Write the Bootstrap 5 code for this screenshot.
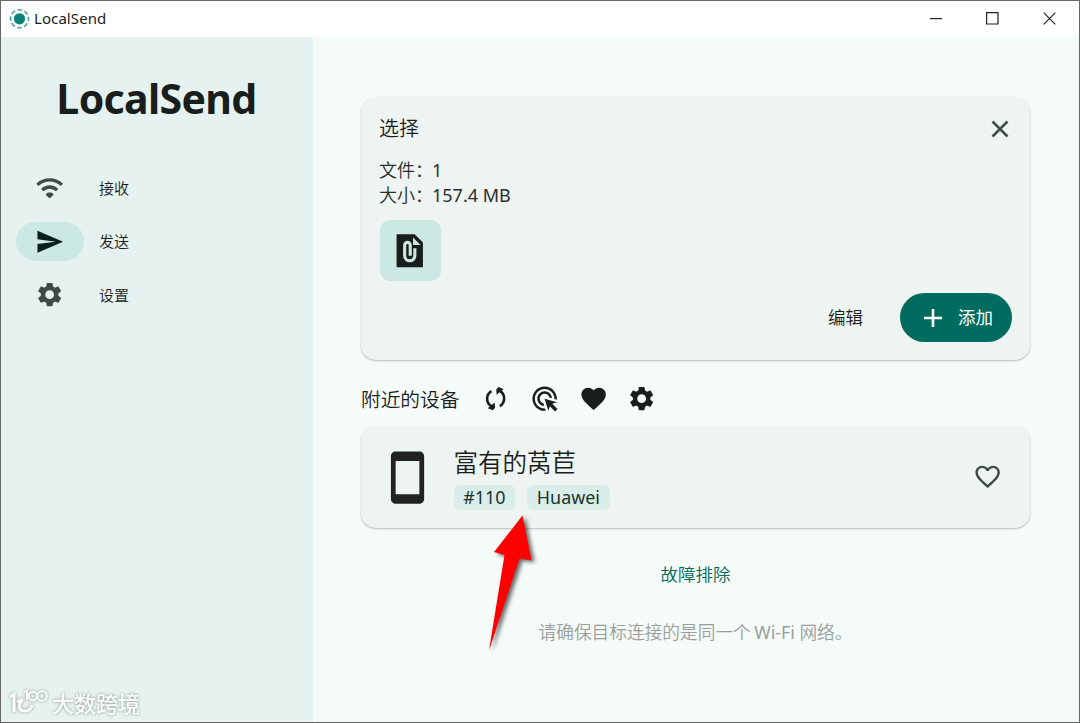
<!DOCTYPE html>
<html lang="zh-CN">
<head>
    <meta charset="UTF-8">
    <meta name="viewport" content="width=device-width, initial-scale=1.0">
    <title>LocalSend</title>
    <link href="https://cdn.jsdelivr.net/npm/bootstrap@5.3.0/dist/css/bootstrap.min.css" rel="stylesheet">
    <style>
        body {
            font-family: "Noto Sans", "Noto Sans CJK SC", sans-serif;
            color: #191d1c;
            background: #f5fbf9;
        }
        svg { display: block; flex-shrink: 0; fill: currentColor; }
        .line-icon { fill: none; stroke: currentColor; }
        .app-window { height: 723px; border: 1px solid #666; overflow: hidden; }
        .title-bar { height: 36px; background: #fff; padding-left: 8px; font-size: 15px; line-height: 20px; }
        .title-name { margin: -2px 0 0 4px; letter-spacing: .08px; }
        .win-btns { margin: -1px 1px 0 0; }
        .win-btn { width: 57px; height: 36px; color: #222; }
        .side-bar { width: 312px; padding-right: 1px; background: #e6f2ef; }
        .app-name { font-size: 41px; line-height: 56px; letter-spacing: -.65px; margin: 33px 0 35px; }
        .side-link { height: 53.5px; padding-left: 15px; font-size: 15px; color: #191d1c; font-weight: 350; }
        .side-pill { width: 68px; height: 39px; border-radius: 20px; margin-right: 15px; color: #3f4947; }
        .active .side-pill { background: #cce8e2; color: #05201c; }
        .main-area { padding: 60px 49px 0 48px; }
        .panel {
            background: #eef4f2;
            border: 0;
            border-radius: 15px;
            box-shadow: 0 1px 2px rgba(0, 0, 0, .26);
        }
        .pick-panel { height: 263px; padding: 17px 18px 18px 18px; font-weight: 350; }
        .pick-title { font-size: 20px; line-height: 30px; }
        .pick-info { font-size: 18px; line-height: 24.5px; margin: 14px 0 13px; color: #2a2e2d; }
        .latin { font-weight: 400; margin-left: -1px; }
        .file-tile { width: 61px; height: 61px; border-radius: 10px; background: #cce8e2; margin-left: .5px; }
        .edit-btn { font-size: 17.5px; margin-right: 37px; }
        .add-btn {
            width: 112px; height: 49px; border-radius: 25px; padding: 0 0 0 5px;
            background: #006b5f; color: #fff; font-size: 17.5px;
        }
        .near-row { height: 66px; padding-top: 12px; }
        .near-title { font-size: 19.7px; font-weight: 350; width: 120px; padding-top: 1px; }
        .near-icons { gap: 19.5px; }
        .device-panel { height: 102px; padding: 0 28px 0 18px; }
        .device-text { margin: 1px 0 0 17.5px; }
        .device-name { font-size: 24.5px; line-height: 34px; margin-bottom: 5px; font-weight: 350; }
        .tag { background: #daede9; border-radius: 6px; height: 25px; line-height: 24px; padding: 0 9.7px; font-size: 17.9px; color: #1a3430; }
        .help-link { font-size: 17.5px; line-height: 26px; color: #006b5f; margin: 33px 0 32px; font-weight: 350; }
        .hint { font-size: 17.7px; line-height: 26px; color: #999e9d; font-weight: 350; }
        .pointer { left: 480px; top: 505px; filter: drop-shadow(3px 2px 2px rgba(0, 0, 0, .6)); }
        .site-mark { left: 8px; top: 686px; color: #fafefd; filter: drop-shadow(0 0 1.5px rgba(0, 0, 0, .4)); }
        .site-mark span { font-size: 22px; line-height: 30px; font-weight: 500; margin-left: 3px; }
    </style>
</head>
<body>
    <svg width="0" height="0" class="position-absolute">
        <symbol id="gear" viewBox="0 0 24 24"><path d="M19.14 12.94c.04-.3.06-.61.06-.94 0-.32-.02-.64-.07-.94l2.03-1.58c.18-.14.23-.41.12-.61l-1.92-3.32c-.12-.22-.37-.29-.59-.22l-2.39.96c-.5-.38-1.03-.7-1.62-.94l-.36-2.54c-.04-.24-.24-.41-.48-.41h-3.84c-.24 0-.43.17-.47.41l-.36 2.54c-.59.24-1.13.57-1.62.94l-2.39-.96c-.22-.08-.47 0-.59.22L2.74 8.87c-.12.21-.08.47.12.61l2.03 1.58c-.05.3-.09.63-.09.94s.02.64.07.94l-2.03 1.58c-.18.14-.23.41-.12.61l1.92 3.32c.12.22.37.29.59.22l2.39-.96c.5.38 1.03.7 1.62.94l.36 2.54c.05.24.24.41.48.41h3.84c.24 0 .44-.17.47-.41l.36-2.54c.59-.24 1.13-.56 1.62-.94l2.39.96c.22.08.47 0 .59-.22l1.92-3.32c.12-.22.07-.47-.12-.61l-2.01-1.58zM12 15.6c-1.98 0-3.6-1.62-3.6-3.6s1.62-3.6 3.6-3.6 3.6 1.62 3.6 3.6-1.62 3.6-3.6 3.6z"/></symbol>
    </svg>

    <div class="app-window d-flex flex-column position-relative">
        <header class="title-bar d-flex align-items-center">
            <svg width="21" height="21" viewBox="0 0 21 21" color="#0b8378">
                <circle cx="10.5" cy="9.8" r="5.6"/>
                <circle cx="10.5" cy="9.8" r="9" fill="none" stroke="currentColor" stroke-width="1.6" stroke-dasharray="4.6 2.47" stroke-dashoffset="2.3" opacity=".75"/>
            </svg>
            <span class="title-name">LocalSend</span>
            <div class="win-btns d-flex ms-auto">
                <div class="win-btn d-flex align-items-center justify-content-center"><svg width="12" height="12"><path d="M0 5h12v1.2H0z"/></svg></div>
                <div class="win-btn d-flex align-items-center justify-content-center"><svg class="line-icon" width="13" height="13"><path d="M.6.6h11.4v11.4H.6z" stroke-width="1.2"/></svg></div>
                <div class="win-btn d-flex align-items-center justify-content-center"><svg class="line-icon" width="13" height="13"><path d="M.7.7l11.6 11.6M12.3.7L.7 12.3" stroke-width="1.2"/></svg></div>
            </div>
        </header>

        <div class="d-flex flex-grow-1">
            <nav class="side-bar flex-shrink-0">
                <h1 class="app-name fw-bold text-center">LocalSend</h1>
                <a class="side-link d-flex align-items-center text-decoration-none">
                    <span class="side-pill d-flex align-items-center justify-content-center">
                        <svg width="29.3" height="29.3" viewBox="0 0 24 24"><path d="M2 9.7C7.5 4.2 16.5 4.2 22 9.7M5.9 14C9.4 10.6 14.6 10.6 18.1 14" fill="none" stroke="currentColor" stroke-width="2.7"/><path d="M9 17.2c1.7-1.5 4.3-1.5 6 0 .3.3.3.5 0 .8l-2.3 2.2c-.5.4-.9.4-1.4 0L9 18c-.3-.3-.3-.5 0-.8z"/></svg>
                    </span>接收
                </a>
                <a class="side-link active d-flex align-items-center text-decoration-none">
                    <span class="side-pill d-flex align-items-center justify-content-center">
                        <svg width="29.3" height="29.3" viewBox="0 0 24 24"><path d="M2.01 21L23 12 2.01 3 2 10l15 2-15 2z"/></svg>
                    </span>发送
                </a>
                <a class="side-link d-flex align-items-center text-decoration-none">
                    <span class="side-pill d-flex align-items-center justify-content-center">
                        <svg width="29.3" height="29.3"><use href="#gear"/></svg>
                    </span>设置
                </a>
            </nav>

            <main class="main-area flex-grow-1">
                <section class="card panel pick-panel">
                    <div class="d-flex justify-content-between align-items-center">
                        <span class="pick-title">选择</span>
                        <svg class="line-icon" width="18" height="18" color="#3c504c" style="margin-right: 3px"><path d="M1.5 1.5l15 15m0-15l-15 15" stroke-width="2.6"/></svg>
                    </div>
                    <div class="pick-info">文件：<span class="latin">1</span><br>大小：<span class="latin">157.4 MB</span></div>
                    <div class="file-tile d-flex align-items-center justify-content-center">
                        <svg width="39.5" height="39.5" viewBox="0 0 24 24">
                            <path d="M4 2h11l5 5v15H4z"/>
                            <path d="M14 3.9v4.6h4.6z" fill="#cce8e2"/>
                            <path d="M15.1 10.5V15a3.1 3.1 0 0 1-6.2 0V8.6a1.7 1.7 0 0 1 3.4 0V15" fill="none" stroke="#cce8e2" stroke-width="1.9"/>
                        </svg>
                    </div>
                    <div class="d-flex justify-content-end align-items-center mt-auto">
                        <span class="edit-btn">编辑</span>
                        <button class="btn add-btn border-0 d-flex align-items-center justify-content-center">
                            <svg class="line-icon" width="18" height="18"><path d="M9 0v18M0 9h18" stroke-width="2.6"/></svg>
                            <span class="ms-3">添加</span>
                        </button>
                    </div>
                </section>

                <div class="near-row d-flex align-items-center">
                    <span class="near-title">附近的设备</span>
                    <div class="near-icons d-flex">
                        <svg width="29.3" height="29.3" viewBox="0 0 24 24">
                            <path d="M8.6 5.9A7.2 7.2 0 0 0 8.9 18.5M15.4 18.1A7.2 7.2 0 0 0 15.1 5.5" fill="none" stroke="currentColor" stroke-width="2.1"/>
                            <path d="M11.2 15.2l.3 4.3-1.7 2-4.3-1.6zM12.8 8.8l-.3-4.3 1.7-2 4.3 1.6z"/>
                        </svg>
                        <svg width="29.3" height="29.3" viewBox="0 0 24 24"><path d="M11.71 17.99C8.53 17.84 6 15.22 6 12c0-3.31 2.69-6 6-6 3.22 0 5.84 2.53 5.99 5.71l-2.1-.63C15.48 9.31 13.89 8 12 8c-2.21 0-4 1.79-4 4 0 1.89 1.31 3.48 3.08 3.89l.63 2.1zM22 12c0 .3-.01.6-.04.9l-1.97-.59c.01-.1.01-.21.01-.31 0-4.42-3.58-8-8-8s-8 3.58-8 8 3.58 8 8 8c.1 0 .21 0 .31-.01l.59 1.97c-.3.03-.6.04-.9.04C6.48 22 2 17.52 2 12S6.48 2 12 2s10 4.48 10 10zm-3.77 4.26L22 15l-10-3 3 10 1.26-3.77 4.27 4.27 1.98-1.98-4.28-4.26z"/></svg>
                        <svg width="29.3" height="29.3" viewBox="0 0 24 24"><path d="M12 21.35l-1.45-1.32C5.4 15.36 2 12.28 2 8.5 2 5.42 4.42 3 7.5 3c1.74 0 3.41.81 4.5 2.09C13.09 3.81 14.76 3 16.5 3 19.58 3 22 5.42 22 8.5c0 3.78-3.4 6.86-8.55 11.54L12 21.35z"/></svg>
                        <svg width="29.3" height="29.3"><use href="#gear"/></svg>
                    </div>
                </div>

                <section class="card panel device-panel flex-row align-items-center">
                    <svg width="57" height="57" viewBox="0 0 24 24" color="#222"><path d="M17 1.01L7 1c-1.1 0-1.99.9-1.99 2v18c0 1.1.89 2 1.99 2h10c1.1 0 2-.9 2-2V3c0-1.1-.9-1.99-2-1.99zM17 19H7V5h10v14z"/></svg>
                    <div class="device-text">
                        <div class="device-name">富有的莴苣</div>
                        <div class="d-flex">
                            <span class="tag me-2">#110</span>
                            <span class="tag ms-1">Huawei</span>
                        </div>
                    </div>
                    <svg class="ms-auto" width="29.3" height="29.3" viewBox="0 0 24 24" color="#3f4947"><path d="M16.5 3c-1.74 0-3.41.81-4.5 2.09C10.91 3.81 9.24 3 7.5 3 4.42 3 2 5.42 2 8.5c0 3.78 3.4 6.86 8.55 11.54L12 21.35l1.45-1.32C18.6 15.36 22 12.28 22 8.5 22 5.42 19.58 3 16.5 3zm-4.4 15.55l-.1.1-.1-.1C7.14 14.24 4 11.39 4 8.5 4 6.5 5.5 5 7.5 5c1.54 0 3.04.99 3.57 2.36h1.87C13.46 5.99 14.96 5 16.5 5c2 0 3.5 1.5 3.5 3.5 0 2.89-3.14 5.74-7.9 10.05z"/></svg>
                </section>

                <div class="help-link text-center">故障排除</div>
                <div class="hint text-center">请确保目标连接的是同一个 <span class="latin">Wi-Fi</span> 网络。</div>
            </main>
        </div>

        <!-- red pointer over the device card -->
        <svg class="pointer position-absolute" width="65" height="150"><path d="M41.5 9.5L50.5 54.500 38.5 52.500 8 144.500 23.500 49 13 46z" fill="#f00"/></svg>

        <div class="site-mark position-absolute d-flex align-items-center">
            <svg class="line-icon" width="40" height="32">
                <path d="M1 10l4-2.500v17.500M13 13.500c-5 5-2.500 11 3 10.500 4 0 6-2 7-6M8 15l6-3" stroke-width="3"/>
                <path d="M15 5l3-1v9" stroke-width="2"/>
                <circle cx="24" cy="9" r="4.3" stroke-width="2"/>
                <circle cx="33" cy="9" r="4.8" stroke-width="2"/>
            </svg>
            <span>大数跨境</span>
        </div>
    </div>
    <script src="https://cdn.jsdelivr.net/npm/bootstrap@5.3.0/dist/js/bootstrap.bundle.min.js"></script>
</body>
</html>
